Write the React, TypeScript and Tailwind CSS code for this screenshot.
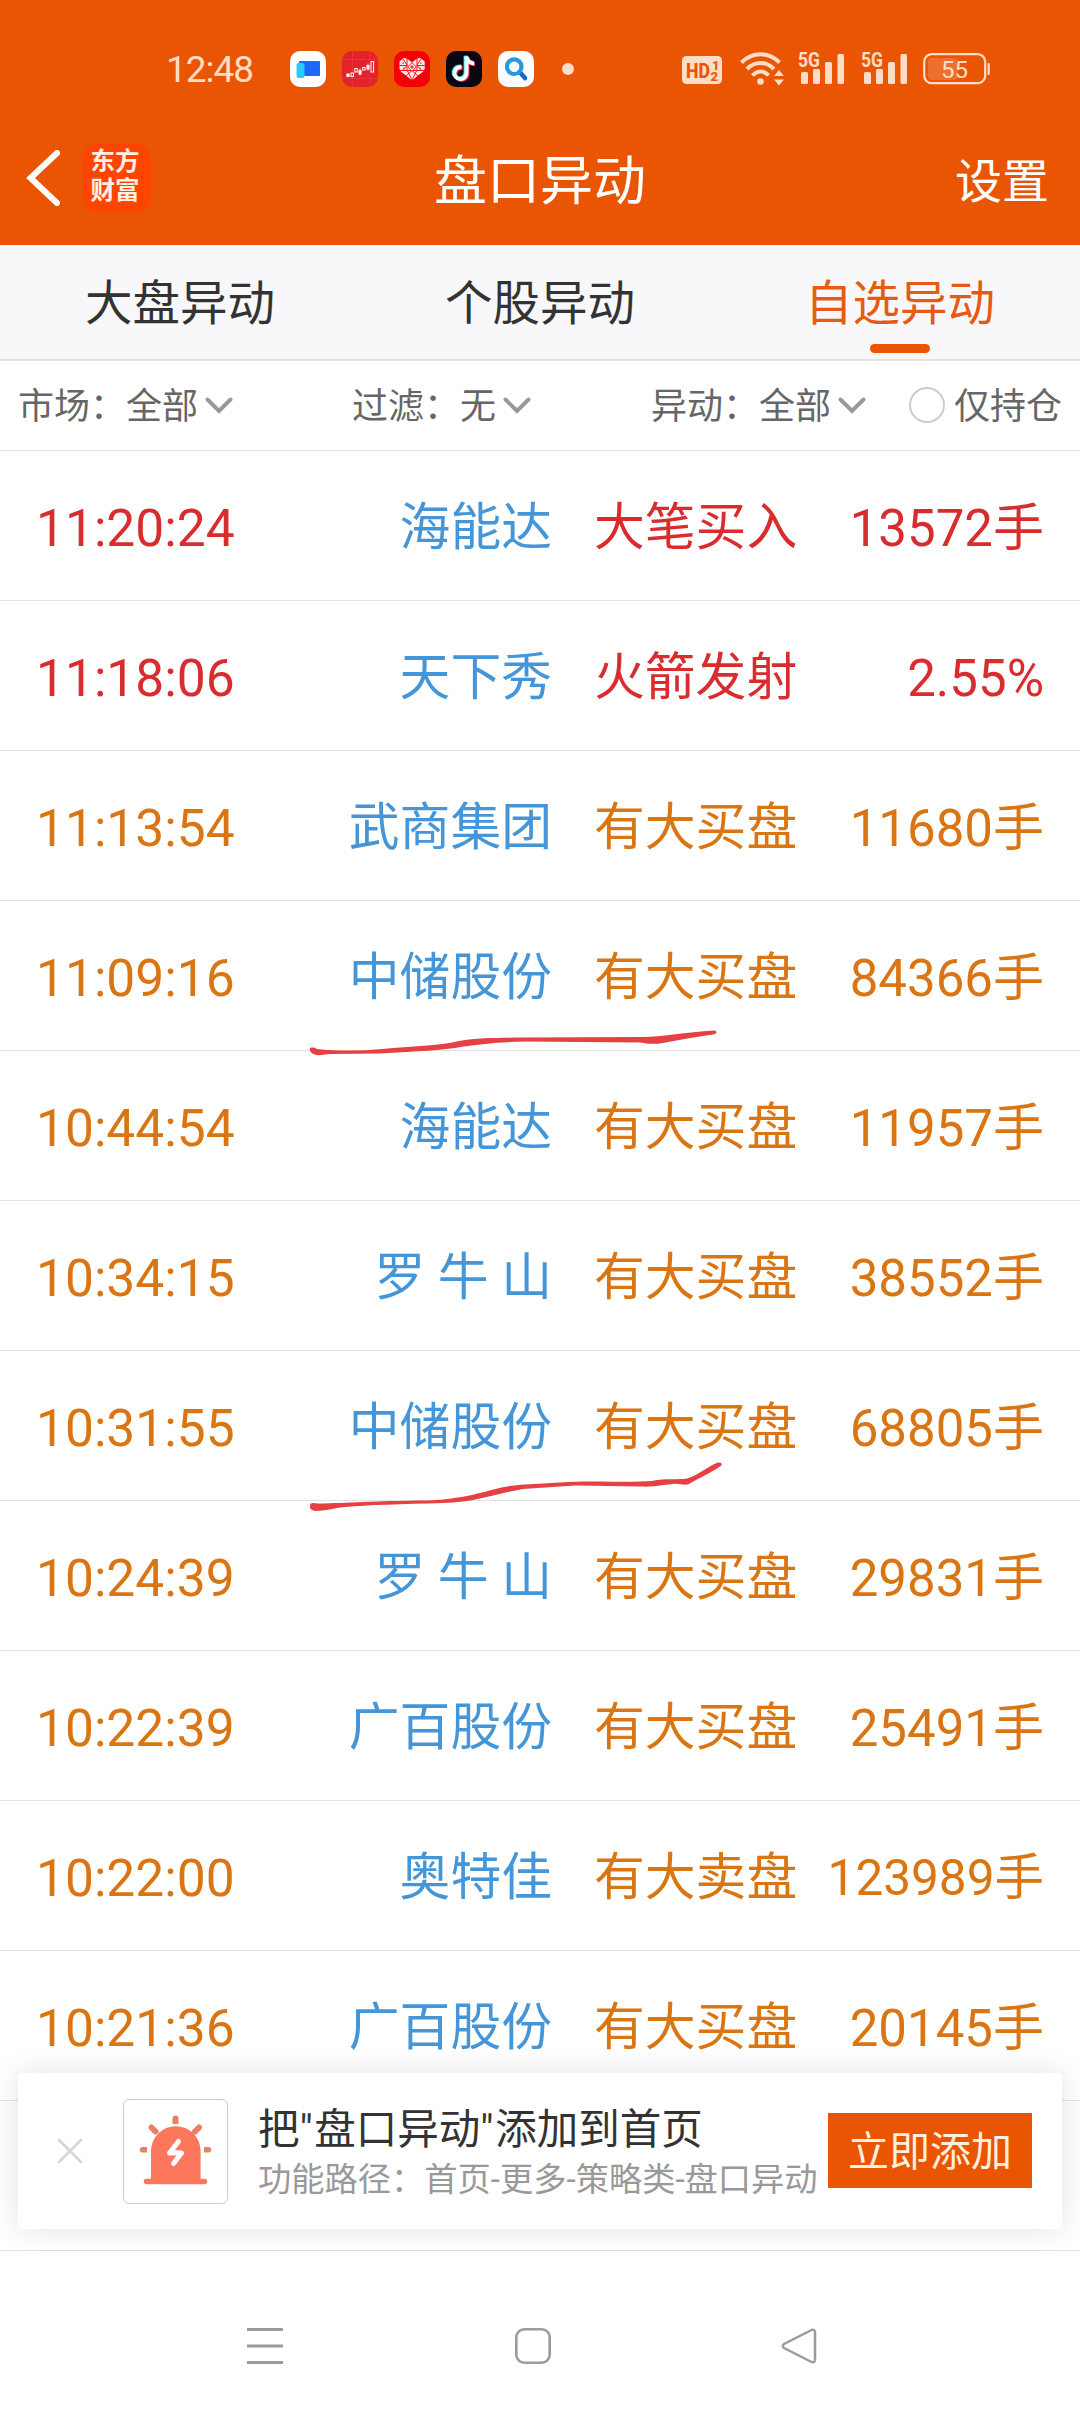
import React from "react";

type Tone = "red" | "orange";

interface Entry {
  time: string;
  name: string;
  kind: string;
  value: string;
  tone: Tone;
  stroke?: "first" | "second";
}

const ENTRIES: Entry[] = [
  { time: "11:20:24", name: "海能达", kind: "大笔买入", value: "13572手", tone: "red" },
  { time: "11:18:06", name: "天下秀", kind: "火箭发射", value: "2.55%", tone: "red" },
  { time: "11:13:54", name: "武商集团", kind: "有大买盘", value: "11680手", tone: "orange" },
  { time: "11:09:16", name: "中储股份", kind: "有大买盘", value: "84366手", tone: "orange", stroke: "first" },
  { time: "10:44:54", name: "海能达", kind: "有大买盘", value: "11957手", tone: "orange" },
  { time: "10:34:15", name: "罗 牛 山", kind: "有大买盘", value: "38552手", tone: "orange" },
  { time: "10:31:55", name: "中储股份", kind: "有大买盘", value: "68805手", tone: "orange", stroke: "second" },
  { time: "10:24:39", name: "罗 牛 山", kind: "有大买盘", value: "29831手", tone: "orange" },
  { time: "10:22:39", name: "广百股份", kind: "有大买盘", value: "25491手", tone: "orange" },
  { time: "10:22:00", name: "奥特佳", kind: "有大卖盘", value: "123989手", tone: "orange" },
  { time: "10:21:36", name: "广百股份", kind: "有大买盘", value: "20145手", tone: "orange" },
];

const TONE: Record<Tone, string> = {
  red: "text-[#d82c2f]",
  orange: "text-[#d97512]",
};

function Signal() {
  return (
    <svg width="47" height="50" viewBox="0 -8 47 50" className="overflow-visible text-[#ffdcc6]">
      <text x="0" y="14.800" fontSize="20.500" fontWeight="700" fontFamily="Roboto, sans-serif" fill="currentColor" textLength="22" lengthAdjust="spacingAndGlyphs">
        5G
      </text>
      <g fill="currentColor">
        <rect x="3" y="20" width="7" height="12" rx="1.500" />
        <rect x="15" y="17" width="7" height="15" rx="1.500" />
        <rect x="27" y="10" width="7" height="22" rx="1.500" />
        <rect x="39.500" y="2" width="6.500" height="30" rx="1.500" />
      </g>
    </svg>
  );
}

function StatusBar() {
  return (
    <div className="flex h-[117px] items-center pt-[21px] text-[#ffdcc6]">
      <span className="ml-[166px] w-[124px] text-[37px] leading-none tracking-[-1px]">12:48</span>
      <div className="flex gap-4">
        <svg width="36" height="36" viewBox="0 0 36 36">
          <rect width="36" height="36" rx="10" fill="#fff" />
          <rect x="9" y="10" width="21" height="15" rx="1" fill="#1c68fb" />
          <rect x="6.500" y="12" width="8" height="15" rx="2" fill="#2bcbf7" />
        </svg>
        <svg width="36" height="36" viewBox="0 0 36 36">
          <rect width="36" height="36" rx="10" fill="#e3222b" />
          <path d="M0 8.500H36M0 27.500H36M10.500 0V36M28 0V36" stroke="#e8414a" strokeWidth="0.600" />
          <g fill="#fff">
            <rect x="4.500" y="22.500" width="3" height="3.500" />
            <rect x="16.500" y="19" width="3" height="4.500" />
            <rect x="24.500" y="14" width="3" height="4.500" />
            <path d="M4 24h4M18 17.500v7M26 12.500v7" stroke="#fff" strokeWidth="0.700" />
          </g>
          <g fill="none" stroke="#fff" strokeWidth="1">
            <rect x="9" y="22" width="2.500" height="3.500" />
            <rect x="12.800" y="17.500" width="2.400" height="3.500" />
            <rect x="20.700" y="16.500" width="2.400" height="2.500" />
            <rect x="29" y="10.500" width="2.600" height="10.500" />
          </g>
        </svg>
        <svg width="36" height="36" viewBox="0 0 36 36">
          <rect width="36" height="36" rx="10" fill="#f40009" />
          <path d="M18 29.300L7 20.800L5.500 18V10.500L10 6.800L14 8.200L18 11.500L22 8.200L26 6.800L30.700 10.500V18L29 20.800z" fill="#ffeaea" />
          <path d="M5.500 14.500H13M30.700 14.500H23M13 8v11M23 8v11M6 19.500H30M13 19l5 10M23 19l-5 10M9 8l4 6M27 8l-4 6M8 20l5-5.500M28 20l-5-5.500M12 25l6-5.500 6 5.500" fill="none" stroke="#f40009" strokeWidth="0.900" />
          <rect x="15" y="13" width="6" height="6" transform="rotate(45 18 16)" fill="#fff" stroke="#f40009" strokeWidth="0.900" />
          <path d="M16 16h4M18 14v4M9.200 11.500v1.500M26.800 11.500v1.500M10 16.500v1.500M26 16.500v1.500" stroke="#f40009" strokeWidth="1" />
        </svg>
        <svg width="36" height="36" viewBox="0 0 36 36">
          <rect width="36" height="36" rx="10" fill="#0b0613" />
          <g fill="none" strokeWidth="3.800">
            <path d="M15.500 16.200a6 6 0 1 0 5 6V5.500c.5 4 3.500 6.500 7.500 7" stroke="#2af0ea" transform="translate(-1 -0.800)" />
            <path d="M15.500 16.200a6 6 0 1 0 5 6V5.500c.5 4 3.500 6.500 7.500 7" stroke="#fb2c55" transform="translate(1.100 0.900)" />
            <path d="M15.500 16.200a6 6 0 1 0 5 6V5.500c.5 4 3.500 6.500 7.500 7" stroke="#fff" />
          </g>
        </svg>
        <svg width="36" height="36" viewBox="0 0 36 36">
          <rect width="36" height="36" rx="10" fill="#fbfcfe" />
          <path d="M22 21.500l5 5.500" stroke="#1b66cb" strokeWidth="4.600" strokeLinecap="round" />
          <circle cx="16.200" cy="15.700" r="7.300" fill="none" stroke="#2499df" strokeWidth="4.200" />
        </svg>
      </div>
      <span className="ml-7 size-3 rounded-full bg-current" />
      <svg width="40" height="28" viewBox="0 0 40 28" className="ml-[108px] mt-0.5">
        <rect width="40" height="28" rx="4.500" fill="#ffdcc6" />
        <g fill="#ea5504" fontFamily="Roboto, sans-serif" fontWeight="800">
          <text x="4" y="21.500" fontSize="21" textLength="24" lengthAdjust="spacingAndGlyphs">HD</text>
          <text x="30" y="13.500" fontSize="13">1</text>
          <text x="28.500" y="25" fontSize="13">2</text>
        </g>
      </svg>
      <svg width="45" height="36" viewBox="0 0 45 36" className="ml-[18px]">
        <g fill="none" stroke="#ffdcc6" strokeWidth="4">
          <path d="M1.500 11.500C12.500 0.500 28.500 0.500 39.500 11.500" />
          <path d="M7 18C15 10 26 10 34 18" />
          <path d="M12.500 24.500C17.500 19 23.500 19 28.500 24.500" />
        </g>
        <circle cx="20.500" cy="30.500" r="3.300" fill="#ffdcc6" />
        <path d="M34 25l5-6 5 6zM34 28.500l5 6 5-6z" fill="#ffdcc6" />
      </svg>
      <div className="ml-[13px] flex gap-4">
        <Signal />
        <Signal />
      </div>
      <svg width="68" height="32" viewBox="0 0 68 32" className="ml-[15px]">
        <rect x="1.200" y="1.200" width="61" height="29" rx="7.500" fill="none" stroke="#ffdcc6" strokeWidth="2.200" />
        <rect x="5" y="5" width="30" height="22" rx="4" fill="#ee6f2b" />
        <path d="M65.700 11v10" stroke="#ffdcc6" strokeWidth="2.200" strokeLinecap="round" />
        <text x="18" y="24.500" fontSize="24" fontFamily="Roboto, sans-serif" fill="#ffdcc6" textLength="27">55</text>
      </svg>
    </div>
  );
}

function TitleBar() {
  return (
    <div className="grid h-32 grid-cols-3 items-center text-white">
      <div className="mb-1.5 flex items-center pl-[26px]">
        <svg width="34" height="56" viewBox="0 0 34 56">
          <path d="M31 3L4.500 28 31 53" fill="none" stroke="#fff" strokeWidth="6" strokeLinecap="round" strokeLinejoin="miter" />
        </svg>
        <div className="ml-[23px] flex size-[68px] flex-col items-center justify-center rounded-[14px] bg-[#ff4400] pr-1 pb-1 text-[24.500px] leading-[29px] font-bold text-[#fff1e4]">
          <span>东方</span>
          <span>财富</span>
        </div>
      </div>
      <h1 className="pt-0.5 text-center text-[53px] leading-none">盘口异动</h1>
      <span className="pr-[31px] text-right text-[47px] leading-none">设置</span>
    </div>
  );
}

function Tabs() {
  return (
    <div className="grid h-[116px] grid-cols-3 border-b-2 border-[#e2e2e3] bg-[#f8f8fa] text-center text-[47.500px] text-[#333]">
      <span className="leading-[119px]">大盘异动</span>
      <span className="leading-[119px]">个股异动</span>
      <span className="relative leading-[119px] text-[#e65b14]">
        自选异动
        <i className="absolute top-[99px] left-1/2 h-[9px] w-15 -translate-x-1/2 rounded-full bg-[#ea5504]" />
      </span>
    </div>
  );
}

function Filter({ label, value }: { label: string; value: string }) {
  return (
    <div className="flex items-center">
      <span>{label}：</span>
      <span>{value}</span>
      <svg width="28" height="18" viewBox="0 0 28 18" className="mb-[3px] ml-[7px]">
        <path d="M2.500 2.500L14 14 25.500 2.500" fill="none" stroke="#999" strokeWidth="4" strokeLinecap="round" />
      </svg>
    </div>
  );
}

function Filters() {
  return (
    <div className="flex h-[90px] items-center border-b border-[#e2e2e2] bg-white px-[18px] pt-[3px] text-[36px] leading-none text-[#666]">
      <div className="w-[334px]"><Filter label="市场" value="全部" /></div>
      <div className="w-[299px]"><Filter label="过滤" value="无" /></div>
      <Filter label="异动" value="全部" />
      <div className="ml-auto flex items-center gap-[9px]">
        <i className="mb-1 size-9 rounded-full border-2 border-[#ccc]" />
        <span>仅持仓</span>
      </div>
    </div>
  );
}

/* Hand-drawn marker lines under a highlighted stock. */
function Marker({ kind }: { kind: "first" | "second" }) {
  return kind === "first" ? (
    <svg width="450" height="80" viewBox="0 0 450 80" className="absolute top-[100px] left-[290px] z-10">
      <path d="M20 49C19 46 23 46 27 48C48 50 70 50 92 48C122 45 148 45 169 40C190 36 210 37 235 36.500L350 36C376 36 394 31 425 29.500C428 31 426 33 423 33.500C405 36 389 39 373 42C360 44 354 42 350 41.500L235 40.500C210 41 190 43 165 47C143 50 112 51 90 52.500L40 53C31 54 24 56 20 50Z" fill="#e54043" />
    </svg>
  ) : (
    <svg width="450" height="90" viewBox="0 0 450 90" className="absolute top-[90px] left-[290px] z-10">
      <path d="M20 65C20 61 24 62 28 62.500C60 62 80 60 138 59.500C190 57 202 45 235 43.500L270 41.500C300 39 336 42 362 40C375 37 390 39 397 37.500C409 34 418 25 428 21.500C432 21 433 24 430 25.500C419 33 409 37 399 43C394 45 389 42 383 43C365 45 362 46 350 45.500L285 44.500L233 48C208 52 188 61 153 62C112 63 78 64 55 66C43 67 36 70 25 70C21 69 20 68 20 65Z" fill="#e54043" />
    </svg>
  );
}

function Row({ entry }: { entry: Entry }) {
  const valueSize = entry.value.length > 6 ? "text-[49.500px]" : "text-[51px]";
  return (
    <div className={`relative flex h-[150px] items-center border-b border-[#e2e2e2] pt-1.5 pr-9 pl-9 text-[50.800px] leading-none whitespace-pre ${TONE[entry.tone]}`}>
      <span className="w-[216px] text-[51.500px]">{entry.time}</span>
      <span className="w-[300px] text-right text-[#4596d9]">{entry.name}</span>
      <span className="ml-[42px]">{entry.kind}</span>
      <span className={`ml-auto ${valueSize}`}>{entry.value}</span>
      {entry.stroke && <Marker kind={entry.stroke} />}
    </div>
  );
}

function Siren() {
  return (
    <svg width="75" height="75" viewBox="0 0 75 75">
      <path d="M13 67V37a24.800 24.800 0 0 1 49.600 0V67z" fill="#fd775c" />
      <path d="M8.500 67.500H66.500" stroke="#fd775c" strokeWidth="5.500" strokeLinecap="round" />
      <path d="M34.500 10V4.500a3 3 0 0 1 6 0V10zM9 33H4.500a2.700 2.700 0 0 0 0 5.400H9zM66 33h4.500a2.700 2.700 0 0 1 0 5.400H66z" fill="#ea7f69" />
      <path d="M13.500 13.500l4 4M61 13.500l-4 4" stroke="#ea7f69" strokeWidth="6" strokeLinecap="round" />
      <path d="M40.500 27.500L31.500 39h12l-8 10.500" fill="none" stroke="#fff" strokeWidth="5" strokeLinecap="round" strokeLinejoin="round" />
      <path d="M33 38.500h9" stroke="#fff" strokeWidth="4" />
    </svg>
  );
}

function Toast() {
  return (
    <div className="absolute top-[2073px] left-[18px] z-20 flex h-[156px] w-[1044px] items-center rounded-[5px] bg-white shadow-[0_0_30px_rgba(0,0,0,0.12)]">
      <svg width="28" height="28" viewBox="0 0 28 28" className="ml-[38px]">
        <path d="M3 3L25 25M25 3L3 25" stroke="#d5d6da" strokeWidth="2.600" strokeLinecap="round" />
      </svg>
      <div className="ml-[39px] flex size-[105px] items-center justify-center rounded-md border border-[#ccc]">
        <Siren />
      </div>
      <div className="ml-[30px] w-[565px] pt-1 whitespace-nowrap">
        <div className="text-[41.500px] leading-[53px] text-[#333]">
          把<span className="tracking-[1.500px]">"</span>盘口异动<span className="tracking-[1.500px]">"</span>添加到首页
        </div>
        <div className="text-[33.250px] leading-[47px] text-[#999]">功能路径：首页-更多-策略类-盘口异动</div>
      </div>
      <button className="mb-px ml-[5px] h-[75px] w-[204px] bg-[#ea5504] pt-[3px] text-[41px] leading-none text-[#ffefdc]">立即添加</button>
    </div>
  );
}

function NavBar() {
  return (
    <div className="flex h-[161px] items-center bg-white pt-[29px]">
      <svg width="36" height="36" viewBox="0 0 36 36" className="ml-[247px]">
        <path d="M0 1.500H36M0 18H36M0 34.500H36" stroke="#9b9b9b" strokeWidth="3" />
      </svg>
      <svg width="36" height="36" viewBox="0 0 36 36" className="ml-[232px]">
        <rect x="1.300" y="1.300" width="33.400" height="33.400" rx="8" fill="none" stroke="#9b9b9b" strokeWidth="2.600" />
      </svg>
      <svg width="36" height="36" viewBox="0 0 36 36" className="ml-[230px]">
        <path d="M30.500 2L3 16q-2.500 2 0 4L30.500 34q3.200 1 3.500-2V4q-.3-3-3.500-2z" fill="none" stroke="#9b9b9b" strokeWidth="2.500" strokeLinejoin="round" />
      </svg>
    </div>
  );
}

export default function App() {
  return (
    <main lang="zh-CN" className="relative flex h-[2412px] w-[1080px] flex-col overflow-hidden bg-white font-[Roboto,'Noto_Sans_CJK_SC',sans-serif]">
      <header className="bg-[#ea5504]">
        <StatusBar />
        <TitleBar />
      </header>
      <Tabs />
      <Filters />
      <section>
        {ENTRIES.map((entry) => (
          <Row key={entry.time} entry={entry} />
        ))}
        <div className="h-[150px] border-b border-[#e2e2e2]" />
      </section>
      <NavBar />
      <Toast />
    </main>
  );
}
